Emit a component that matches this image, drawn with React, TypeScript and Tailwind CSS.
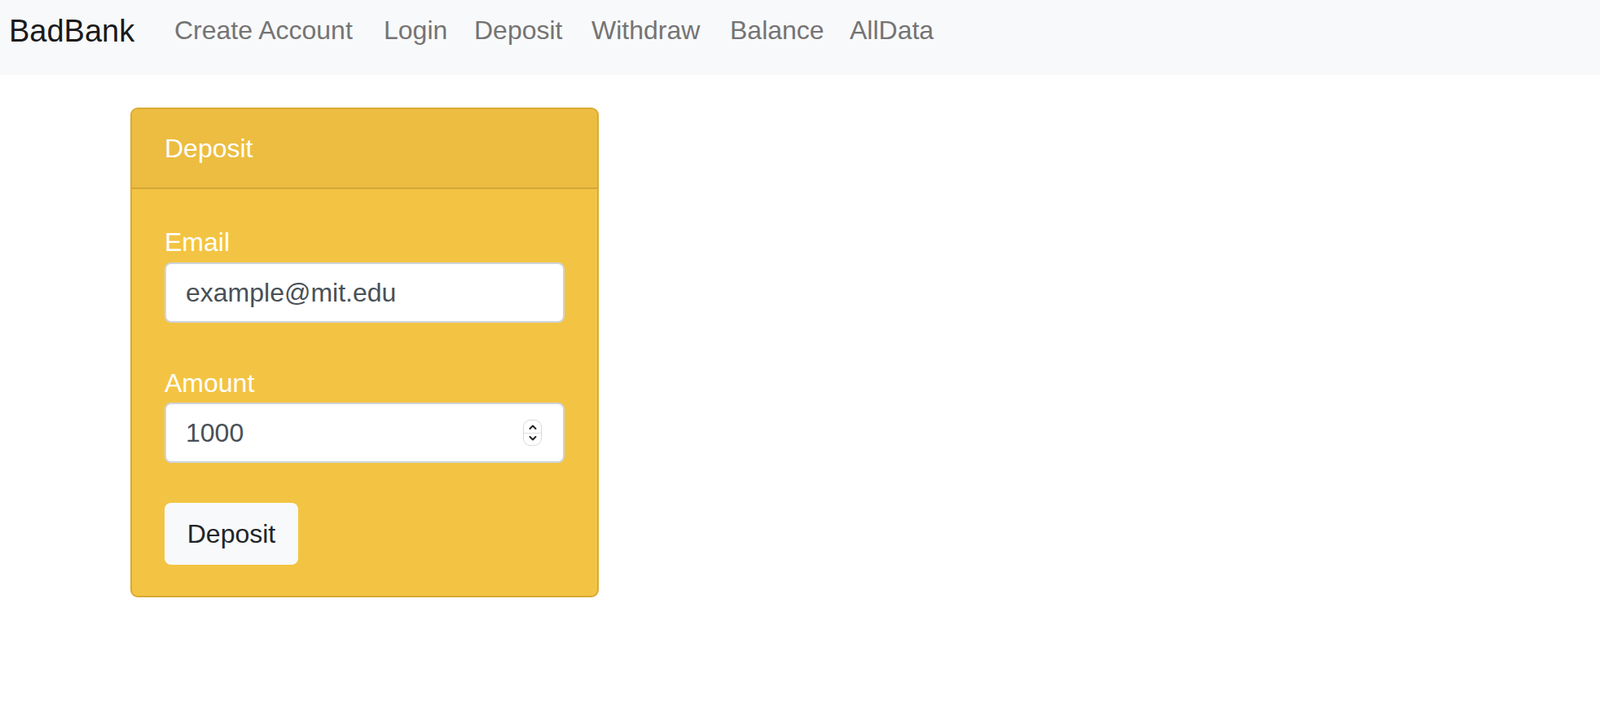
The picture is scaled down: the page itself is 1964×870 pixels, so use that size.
const links = [
  { label: "Create Account", w: "w-[257px]" },
  { label: "Login", w: "w-[111px]" },
  { label: "Deposit", w: "w-[144px]" },
  { label: "Withdraw", w: "w-[170px]" },
  { label: "Balance", w: "w-[147px]" },
  { label: "AllData", w: "w-[140px]" },
]

function Spinner() {
  return (
    <div className="flex h-[32px] w-[23px] flex-col items-center justify-between rounded-[9px] border border-[#d9d9d9] bg-white py-[3px]">
      <svg width="12" height="10" viewBox="0 0 12 10" fill="none">
        <path d="M2.5 7 L6 3.5 L9.5 7" stroke="#222" strokeWidth="2" strokeLinecap="round" strokeLinejoin="round" />
      </svg>
      <div className="h-px w-full bg-[#e2e2e2]" />
      <svg width="12" height="10" viewBox="0 0 12 10" fill="none">
        <path d="M2.5 3 L6 6.5 L9.5 3" stroke="#222" strokeWidth="2" strokeLinecap="round" strokeLinejoin="round" />
      </svg>
    </div>
  )
}

export default function App() {
  return (
    <div className="min-h-screen bg-white font-['Liberation_Sans',Arial,sans-serif]">
      {/* Navbar */}
      <nav className="flex h-[92px] items-start bg-[#f8f9fa] px-[11px] pt-[13px]">
        <a className="mt-[1px] w-[203px] text-[38px] leading-[48px] text-[#1a1a1a]">BadBank</a>
        <div className="flex">
          {links.map((l) => (
            <a key={l.label} className={`${l.w} text-[32px] leading-[48px] text-[#747474]`}>
              {l.label}
            </a>
          ))}
        </div>
      </nav>

      {/* Card */}
      <div className="pl-[160px] pt-[40px]">
        <div className="w-[575px] overflow-hidden rounded-[9px] border-2 border-[#d8aa35] bg-[#f3c443]">
          <div className="border-b-2 border-[#d4a737] bg-[#ecbd41] px-[40px] py-[24px] text-[32px] leading-[48px] text-white">
            Deposit
          </div>
          <div className="px-[40px] pb-[38px] pt-[41px]">
            <label className="block text-[32px] leading-[48px] text-white">Email</label>
            <input
              readOnly
              value="example@mit.edu"
              className="mt-[1px] block h-[74px] w-full rounded-[8px] border-2 border-[#ced4da] bg-white px-[24px] text-[32px] text-[#495057] outline-none"
            />
            <label className="mt-[50px] block text-[32px] leading-[48px] text-white">Amount</label>
            <div className="flex h-[74px] w-full items-center rounded-[8px] border-2 border-[#ced4da] bg-white pl-[24px] pr-[26px]">
              <input
                readOnly
                value="1000"
                className="min-w-0 flex-1 bg-transparent text-[32px] text-[#495057] outline-none"
              />
              <Spinner />
            </div>
            <button className="mt-[49px] h-[76px] w-[164px] rounded-[8px] bg-[#f8f9fa] text-[32px] text-[#212529]">
              Deposit
            </button>
          </div>
        </div>
      </div>
    </div>
  )
}
